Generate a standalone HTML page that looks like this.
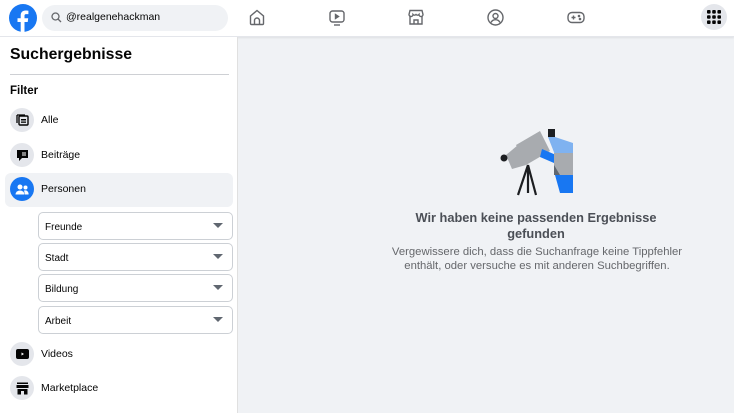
<!DOCTYPE html>
<html><head><meta charset="utf-8"><style>
*{margin:0;padding:0;box-sizing:border-box}
body{width:734px;height:413px;overflow:hidden;background:#f0f2f5;font-family:"Liberation Sans",Arial,sans-serif;color:#050505;position:relative}
.hdr{position:absolute;left:0;top:0;width:734px;height:37px;background:#fff;border-bottom:1px solid #e4e6eb;box-shadow:0 1px 2px rgba(0,0,0,.08)}
.side{position:absolute;left:0;top:37px;width:238px;height:376px;background:#fff;border-right:1px solid #e0e0e0}
.abs{position:absolute}
.ic{position:absolute;left:10px;width:24px;height:24px;border-radius:50%;background:#e4e6eb;display:flex;align-items:center;justify-content:center}
.lbl{position:absolute;left:41px;font-size:10.5px;color:#050505}
.dd{position:absolute;left:38px;width:195px;height:28px;border:1px solid #ccd0d5;border-radius:5px;font-size:10px;padding:9px 0 0 6px;color:#050505}
.dd:after{content:"";position:absolute;right:9px;top:10px;border-left:5px solid transparent;border-right:5px solid transparent;border-top:5px solid #606770}
</style></head><body>
<div class="hdr">
 <svg class="abs" style="left:9px;top:4px" width="28" height="28" viewBox="0 0 28 28"><circle cx="14" cy="14" r="14" fill="#1877f2"/><path d="M15.5 28V18h3.2l.5-3.8h-3.7v-2.3c0-1.1.3-1.8 1.9-1.8h2V6.7c-.4 0-1.5-.2-2.9-.2-2.9 0-4.8 1.7-4.8 4.9v2.8H8.5V18h3.2v10z" fill="#fff"/></svg>
 <div class="abs" style="left:42px;top:5px;width:186px;height:26px;border-radius:13px;background:#f0f2f5"></div>
 <svg class="abs" style="left:51px;top:12px" width="11" height="11" viewBox="0 0 11 11"><circle cx="4.5" cy="4.5" r="3.5" fill="none" stroke="#65676b" stroke-width="1.3"/><path d="M7 7l3 3" stroke="#65676b" stroke-width="1.3"/></svg>
 <div class="abs" style="left:66px;top:11px;font-size:10.5px;color:#050505">@realgenehackman</div>
 <svg class="abs" style="left:249px;top:9px" width="16" height="17" viewBox="0 0 16 17" fill="none" stroke="#65676b" stroke-width="1.4"><path d="M1.5 7L8 1.5 14.5 7v7.5a1 1 0 01-1 1h-11a1 1 0 01-1-1z"/><path d="M5.5 15.5v-4a2.5 2.5 0 015 0v4"/></svg>
 <svg class="abs" style="left:329px;top:10px" width="16" height="16" viewBox="0 0 16 16" fill="none" stroke="#65676b" stroke-width="1.4"><rect x="1" y="1" width="14" height="11" rx="2.5"/><path d="M5 15h6"/><path d="M6.5 4.5v4l3-2z" fill="#65676b"/></svg>
 <svg class="abs" style="left:408px;top:9px" width="16" height="17" viewBox="0 0 16 17" fill="none" stroke="#65676b" stroke-width="1.4"><path d="M2 1.5h12l1 4a2 2 0 01-4 0 2 2 0 01-3 0 2 2 0 01-3 0 2 2 0 01-4 0z"/><path d="M2 7v8h12V7"/><path d="M6 15v-4h4v4"/></svg>
 <svg class="abs" style="left:487px;top:9px" width="17" height="17" viewBox="0 0 17 17" fill="none" stroke="#65676b" stroke-width="1.4"><circle cx="8.5" cy="8.5" r="7.5"/><circle cx="8.5" cy="7" r="2.5"/><path d="M4 13.5a5 5 0 019 0"/></svg>
 <svg class="abs" style="left:567px;top:11px" width="18" height="13" viewBox="0 0 18 13" fill="none" stroke="#65676b" stroke-width="1.4"><rect x="1" y="1.5" width="16" height="10" rx="4"/><path d="M4.5 6.5h4M6.5 4.5v4"/><circle cx="12" cy="5" r=".6"/><circle cx="13" cy="8" r=".6"/></svg>
 <div class="abs" style="left:701px;top:4px;width:26px;height:26px;border-radius:50%;background:#e4e6eb"></div>
 <svg class="abs" style="left:707px;top:10px" width="14" height="14" viewBox="0 0 14 14" fill="#050505"><rect x="0" y="0" width="3.6" height="3.6" rx="1"/><rect x="5.2" y="0" width="3.6" height="3.6" rx="1"/><rect x="10.4" y="0" width="3.6" height="3.6" rx="1"/><rect x="0" y="5.2" width="3.6" height="3.6" rx="1"/><rect x="5.2" y="5.2" width="3.6" height="3.6" rx="1"/><rect x="10.4" y="5.2" width="3.6" height="3.6" rx="1"/><rect x="0" y="10.4" width="3.6" height="3.6" rx="1"/><rect x="5.2" y="10.4" width="3.6" height="3.6" rx="1"/><rect x="10.4" y="10.4" width="3.6" height="3.6" rx="1"/></svg>
</div>
<div class="side"></div>
<div class="abs" style="left:10px;top:46px;font-size:15.8px;font-weight:bold">Suchergebnisse</div>
<div class="abs" style="left:10px;top:74px;width:219px;height:1px;background:#ced0d4"></div>
<div class="abs" style="left:10px;top:85px;font-size:11.5px;font-weight:bold">Filter</div>
<div class="abs" style="left:5px;top:173px;width:228px;height:34px;background:#f0f2f5;border-radius:6px"></div>
<div class="ic" style="top:108px"><svg width="13" height="12" viewBox="0 0 13 12"><rect x="3" y="2" width="9" height="9" rx="1" fill="none" stroke="#050505" stroke-width="1.4"/><path d="M1 1h8M1 1v8" stroke="#050505" stroke-width="1.3"/><rect x="5" y="5" width="5" height="1.5" fill="#050505"/><rect x="5" y="7.5" width="5" height="1.3" fill="#050505"/></svg></div>
<div class="lbl" style="top:114px">Alle</div>
<div class="ic" style="top:143px"><svg width="13" height="13" viewBox="0 0 13 13"><path d="M1 1h11v8H6l-3 3V9H1z" fill="#050505"/><path d="M6 4h4M6 6h4" stroke="#fff" stroke-width="1"/></svg></div>
<div class="lbl" style="top:149px">Beiträge</div>
<div class="ic" style="top:177px;background:#1877f2"><svg width="14" height="11" viewBox="0 0 14 11" fill="#fff"><circle cx="5" cy="3" r="2.5"/><circle cx="10.5" cy="3.5" r="2"/><path d="M0.5 10.5a4.5 4 0 019 0z"/><path d="M10 10.5h3.5a3.5 3.5 0 00-4.5-4z"/></svg></div>
<div class="lbl" style="top:183px">Personen</div>
<div class="dd" style="top:212px">Freunde</div>
<div class="dd" style="top:243px">Stadt</div>
<div class="dd" style="top:274px">Bildung</div>
<div class="dd" style="top:306px">Arbeit</div>
<div class="ic" style="top:342px"><svg width="13" height="10" viewBox="0 0 13 10"><rect width="13" height="10" rx="2" fill="#050505"/><path d="M5.5 3.5v3l2.5-1.5z" fill="#fff"/></svg></div>
<div class="lbl" style="top:348px">Videos</div>
<div class="ic" style="top:376px"><svg width="13" height="13" viewBox="0 0 13 13" fill="#050505"><rect x="1" y="0.5" width="11" height="1.5"/><path d="M0.5 3h12v3H.5z"/><path d="M1.5 7h10v5.5h-10z"/><rect x="5" y="9" width="3" height="3.5" fill="#e4e6eb"/></svg></div>
<div class="lbl" style="top:382px">Marketplace</div>

<svg class="abs" style="left:498px;top:127px" width="78" height="70" viewBox="0 0 78 70">
 <path d="M18 18L42 4l10 20-24 14z" fill="#a8abaf"/>
 <path d="M8 28l12-10 8 20-14 4z" fill="#a8abaf"/>
 <circle cx="6" cy="31" r="3.5" fill="#1c1e21"/>
 <path d="M30 38L20 68M30 38l8 30M30 38v28" stroke="#1c1e21" stroke-width="2.2" fill="none"/>
 <rect x="50" y="2" width="7" height="8" fill="#1c1e21"/>
 <path d="M50 10h7l18 6v22h-14z" fill="#7fb2f0"/>
 <path d="M44 22l14 6-2 8-14-6z" fill="#1877f2"/>
 <path d="M56 26h19v22H56z" fill="#a8abaf"/>
 <path d="M57 48h18v18H62z" fill="#1877f2"/>
 <path d="M56 38l6 10h-6z" fill="#606770"/>
</svg>
<div class="abs" style="left:353px;top:210px;width:366px;text-align:center;font-size:12.8px;font-weight:bold;color:#4b4f56;line-height:16px">Wir haben keine passenden Ergebnisse<br>gefunden</div>
<div class="abs" style="left:354px;top:245px;width:366px;text-align:center;font-size:11.3px;color:#65676b;line-height:14px">Vergewissere dich, dass die Suchanfrage keine Tippfehler<br>enthält, oder versuche es mit anderen Suchbegriffen.</div>
</body></html>
